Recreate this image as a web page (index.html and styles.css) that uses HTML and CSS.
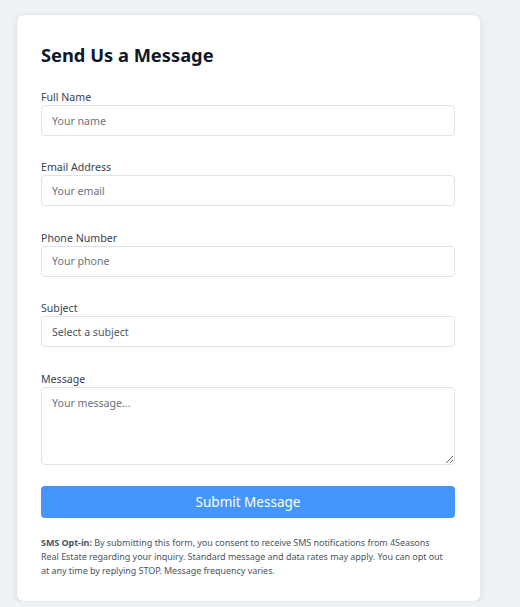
FILE: index.html
```html
<!DOCTYPE html>
<html>
<head>
<meta charset="utf-8">
<link rel="stylesheet" href="styles.css">
</head>
<body>
<div class="card">
  <h2 class="title">Send Us a Message</h2>
  <form class="form">
    <div class="group">
      <label class="label">Full Name</label>
      <input class="field" type="text" placeholder="Your name">
    </div>
    <div class="group">
      <label class="label">Email Address</label>
      <input class="field" type="email" placeholder="Your email">
    </div>
    <div class="group">
      <label class="label">Phone Number</label>
      <input class="field" type="tel" placeholder="Your phone">
    </div>
    <div class="group">
      <label class="label">Subject</label>
      <div class="field select">Select a subject</div>
    </div>
    <div class="group group-last">
      <label class="label">Message</label>
      <textarea class="field area" placeholder="Your message..."></textarea>
    </div>
    <button type="button" class="submit">Submit Message</button>
    <p class="note"><strong>SMS Opt-in:</strong> By submitting this form, you consent to receive SMS notifications from 4Seasons Real Estate regarding your inquiry. Standard message and data rates may apply. You can opt out at any time by replying STOP. Message frequency varies.</p>
  </form>
</div>
</body>
</html>
```

FILE: styles.css
```css
html, body {
  margin: 0;
  padding: 0;
  background: #eef2f7;
}
body {
  padding: 14px 39px 0 16px;
  font-family: "Noto Sans", "Open Sans", sans-serif;
  color: #1f2937;
}
.card {
  width: 465px;
  box-sizing: border-box;
  background: #ffffff;
  border: 1px solid #e3e8ef;
  border-radius: 8px;
  padding: 24px 25px 23px 24px;
  box-shadow: 0 2px 6px rgba(30, 41, 59, 0.08);
}
.title {
  margin: 0 0 18px;
  font-size: 18.3px;
  line-height: 32px;
  font-weight: 700;
  color: #0f172a;
}
.form {
  display: flex;
  flex-direction: column;
}
.group {
  display: flex;
  flex-direction: column;
  margin-bottom: 23.4px;
}
.group-last {
  margin-bottom: 21px;
}
.label {
  font-size: 10.6px;
  line-height: 16px;
  color: #374151;
}
.field {
  box-sizing: border-box;
  height: 31px;
  width: 100%;
  border: 1px solid #dfe4ec;
  border-radius: 4px;
  padding: 0 10px;
  font-family: inherit;
  font-size: 10.6px;
  color: #374151;
  background: #fff;
  outline: none;
}
.field::placeholder {
  color: #6b7280;
}
.select {
  display: flex;
  align-items: center;
  color: #4b5563;
}
.area {
  height: 78px;
  padding: 7px 10px;
  resize: vertical;
  line-height: 16px;
}
.submit {
  height: 32px;
  border: none;
  border-radius: 4px;
  background: #4496fc;
  color: #ffffff;
  font-family: inherit;
  font-size: 13.5px;
  cursor: pointer;
}
.note {
  margin: 18px 0 0;
  max-width: 408px;
  font-size: 9px;
  letter-spacing: -0.05px;
  line-height: 14px;
  color: #4b5563;
}
.note strong {
  font-weight: 700;
}
```
